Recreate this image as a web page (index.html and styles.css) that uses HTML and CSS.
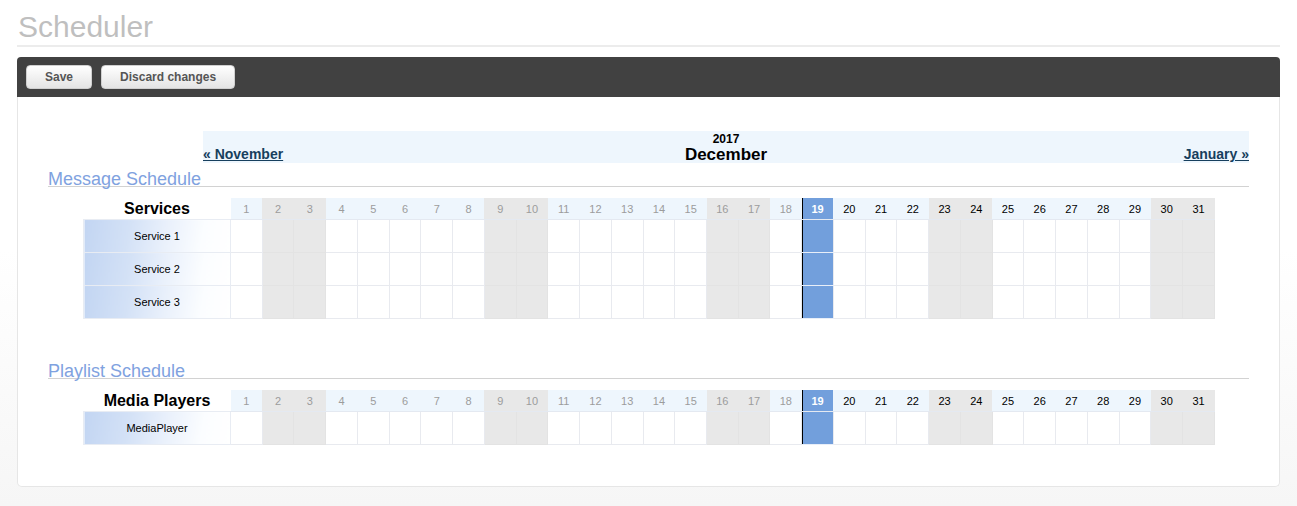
FILE: index.html
```html
<!DOCTYPE html>
<html lang="en">
<head>
    <meta charset="UTF-8">
    <title>Scheduler</title>
    <link rel="stylesheet" href="styles.css">
</head>
<body>
    <div class="page">
        <h1 class="titulo">Scheduler</h1>

        <div class="toolbar">
            <button class="btn">Save</button>
            <button class="btn">Discard changes</button>
        </div>

        <div class="painel">
            <div class="mes">
                <a href="#" class="mes-link">&laquo; November</a>
                <div class="mes-centro">
                    <div class="ano">2017</div>
                    <div class="mes-nome">December</div>
                </div>
                <a href="#" class="mes-link direita">January &raquo;</a>
            </div>

            <h2 class="secao">Message Schedule</h2>
            <table class="agenda" id="tabelaMensagens"></table>

            <h2 class="secao segunda">Playlist Schedule</h2>
            <table class="agenda" id="tabelaPlaylist"></table>
        </div>
    </div>

    <script>
        // dias de fim de semana em dezembro de 2017
        const fimDeSemana = [2, 3, 9, 10, 16, 17, 23, 24, 30, 31];
        const hoje = 19;

        function classeDia(dia) {
            let c = 'dia';
            if (fimDeSemana.includes(dia)) c += ' fds';
            if (dia < hoje) c += ' passado';
            if (dia === hoje) c += ' hoje';
            return c;
        }

        function montarTabela(id, titulo, nomes) {
            const tabela = document.getElementById(id);
            let html = '<colgroup><col class="col-nome">';
            for (let d = 1; d <= 31; d++) html += '<col>';
            html += '</colgroup><thead><tr><th class="cabecalho">' + titulo + '</th>';
            for (let d = 1; d <= 31; d++) {
                html += '<th class="' + classeDia(d) + '">' + d + '</th>';
            }
            html += '</tr></thead><tbody>';
            nomes.forEach(nome => {
                html += '<tr><th class="nome">' + nome + '</th>';
                for (let d = 1; d <= 31; d++) {
                    html += '<td class="' + classeDia(d) + '"></td>';
                }
                html += '</tr>';
            });
            html += '</tbody>';
            tabela.innerHTML = html;
        }

        montarTabela('tabelaMensagens', 'Services', ['Service 1', 'Service 2', 'Service 3']);
        montarTabela('tabelaPlaylist', 'Media Players', ['MediaPlayer']);
    </script>
</body>
</html>
```

FILE: styles.css
```css
body {
    margin: 0;
    font-family: "Liberation Sans", Arial, sans-serif;
    background: linear-gradient(to bottom, #fff 0, #fff 250px, #f6f6f6 506px);
    min-height: 100vh;
}

.page {
    padding: 0 17px 20px;
}

.titulo {
    margin: 0 0 10px;
    padding: 10px 0 1px 1px;
    font-size: 30px;
    line-height: 34px;
    font-weight: normal;
    color: #bfbfbf;
    border-bottom: 2px solid #ececec;
}

/* Barra de botões */
.toolbar {
    display: flex;
    gap: 9px;
    height: 40px;
    box-sizing: border-box;
    padding: 8px 9px;
    background: #414141;
    border-radius: 4px 4px 0 0;
}

.btn {
    height: 24px;
    padding: 0 18px;
    font-family: "Liberation Sans", Arial, sans-serif;
    font-size: 12px;
    font-weight: bold;
    color: #555;
    background: linear-gradient(to bottom, #fff, #e4e4e4);
    border: 1px solid #d0d0d0;
    border-radius: 4px;
}

.painel {
    background: #fff;
    border: 1px solid #e6e6e6;
    border-top: 0;
    border-radius: 0 0 5px 5px;
    padding: 34px 30px 41px;
}

/* Cabeçalho do mês */
.mes {
    margin-left: 155px;
    height: 32px;
    background: #eef6fd;
    display: flex;
    justify-content: space-between;
    align-items: flex-end;
}

.mes-link {
    font-size: 14px;
    line-height: 17px;
    font-weight: bold;
    color: #173f5d;
    width: 120px;
}

.mes-link.direita {
    text-align: right;
}

.mes-centro {
    text-align: center;
    font-weight: bold;
    color: #000;
}

.ano {
    font-size: 12px;
    line-height: 14px;
}

.mes-nome {
    font-size: 17px;
    line-height: 17px;
}

/* Títulos das seções */
.secao {
    margin: 9px 0 0;
    font-size: 18px;
    line-height: 14px;
    font-weight: normal;
    color: #7fa2e0;
    border-bottom: 1px solid #d2d2d2;
}

.secao.segunda {
    margin-top: 45px;
}

/* Tabelas de agenda */
.agenda {
    margin: 11px 0 0 35px;
    width: 1132px;
    table-layout: fixed;
    border-collapse: collapse;
}

.col-nome {
    width: 147px;
}

.agenda th.cabecalho {
    font-size: 16px;
    font-weight: bold;
    color: #000;
    background: #fff;
    padding: 0;
}

.agenda thead th.dia {
    height: 21px;
    padding: 0;
    font-size: 11px;
    font-weight: normal;
    color: #000;
    background: #eef6fd;
    border-bottom: 1px solid #e4e9f1;
}

.agenda thead th.passado {
    color: #9c9c9c;
}

.agenda thead th.fds {
    background: #e8e8e8;
}

.agenda thead th.hoje {
    background: #729fdc;
    color: #fff;
    font-weight: bold;
}

.agenda th.nome {
    height: 32px;
    padding: 0;
    font-size: 11px;
    font-weight: normal;
    color: #000;
    border: 1px solid #e8ecf3;
    background: linear-gradient(100deg, #c2d5f2 0%, #d3e1f6 30%, #e9f0fb 55%, #fbfdff 80%, #fff 100%);
}

.agenda td.dia {
    padding: 0;
    border: 1px solid #e8eaef;
    background: #fff;
}

.agenda td.fds {
    background: #e8e8e8;
    border-color: #e3e3e3;
}

.agenda td.hoje {
    background: #729fdc;
    border-top-color: #e8eef8;
    border-bottom-color: #e8eef8;
}

.agenda .hoje {
    box-shadow: inset 1px 0 0 #000;
}
```
